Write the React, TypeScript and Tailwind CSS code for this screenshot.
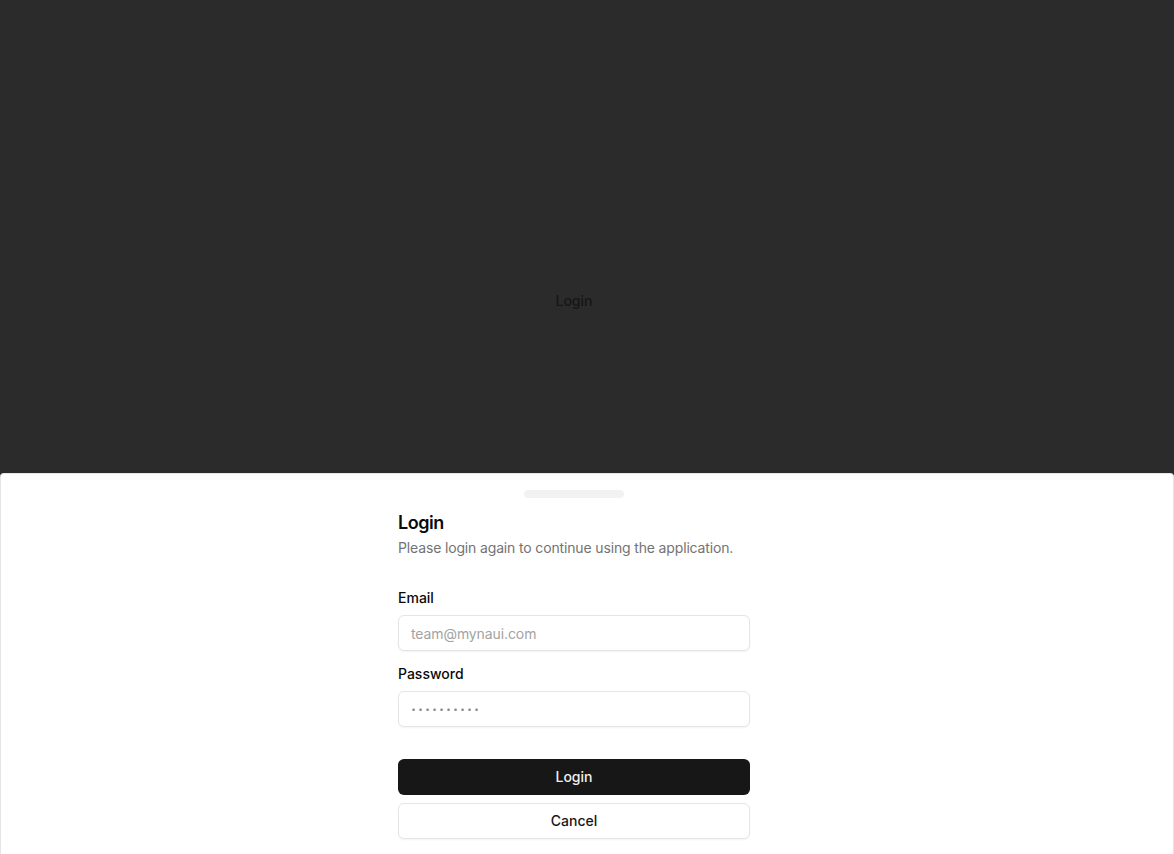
export default function App() {
  return (
    <div
      className="flex h-screen w-full flex-col overflow-hidden bg-[#2b2b2b]"
      style={{ fontFamily: "Inter, 'Liberation Sans', sans-serif" }}
    >
      {/* page behind the overlay */}
      <div className="flex h-[473px] shrink-0 items-start justify-center pr-[26px] pt-[292px]">
        <span className="text-sm font-medium leading-[18px] text-[#161616]">Login</span>
      </div>

      {/* drawer */}
      <div className="flex flex-1 flex-col rounded-t-[4px] border border-b-0 border-[#e5e5e5] bg-white pr-[26px]">
        <div className="mx-auto mt-4 h-2 w-[100px] rounded-full bg-[#f2f2f2]" />
        <div className="mx-auto w-full max-w-sm">
          <div className="flex flex-col gap-1.5 p-4">
            <h2 className="text-lg font-semibold leading-none tracking-tight text-[#0a0a0a]">Login</h2>
            <p className="text-sm leading-5 tracking-[-0.15px] text-[#737373]">
              Please login again to continue using the application.
            </p>
          </div>

          <div className="flex flex-col gap-4 px-4 pb-4 pt-[17px]">
            <div className="flex flex-col gap-2.5">
              <label className="text-sm font-medium leading-none text-[#0a0a0a]">Email</label>
              <input
                type="email"
                placeholder="team@mynaui.com"
                className="h-9 w-full rounded-md border border-[#e5e5e5] bg-white px-3 text-sm tracking-[-0.1px] text-[#0a0a0a] shadow-xs outline-none placeholder:text-[#a3a3a3]"
              />
            </div>
            <div className="flex flex-col gap-2.5">
              <label className="text-sm font-medium leading-none text-[#0a0a0a]">Password</label>
              <input
                type="password"
                placeholder="··········"
                className="h-9 w-full rounded-md border border-[#e5e5e5] bg-white px-3 text-[15px] font-bold tracking-[2px] text-[#0a0a0a] shadow-xs outline-none placeholder:text-[#8a8a8a]"
              />
            </div>
          </div>

          <div className="flex flex-col gap-2 p-4">
            <button className="h-9 w-full rounded-md bg-[#171717] text-sm font-medium text-[#f0f0f0]">
              Login
            </button>
            <button className="h-9 w-full rounded-md border border-[#e5e5e5] bg-white text-sm font-medium text-[#171717] shadow-xs">
              Cancel
            </button>
          </div>
        </div>
      </div>
    </div>
  );
}
